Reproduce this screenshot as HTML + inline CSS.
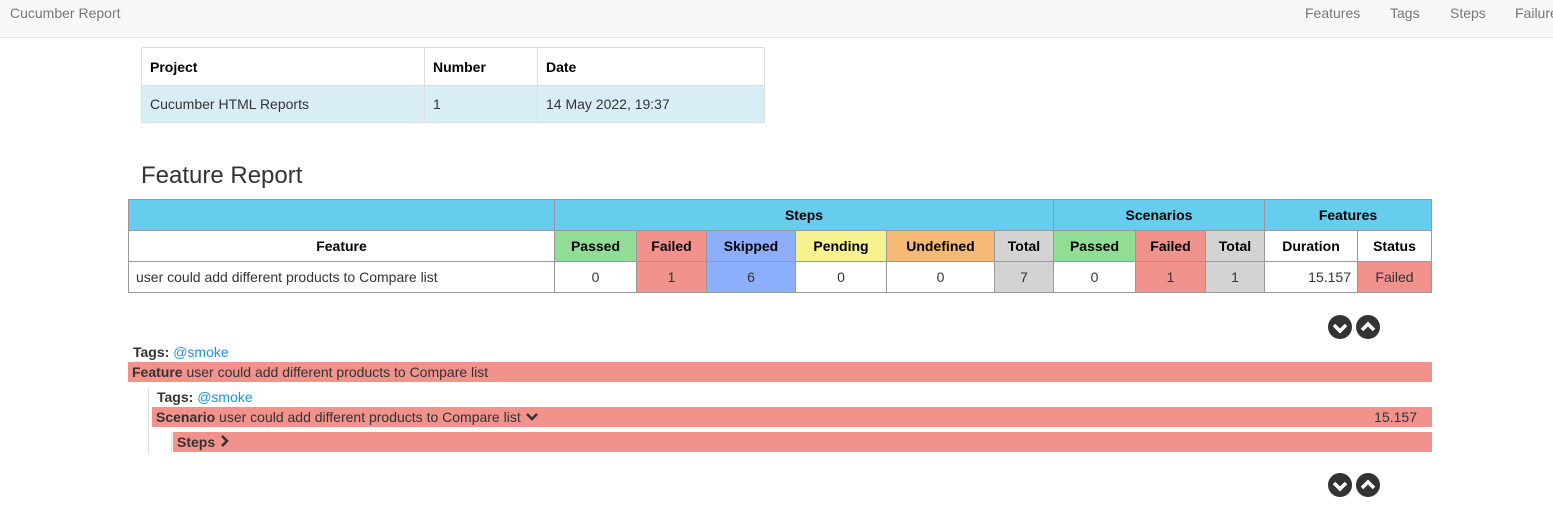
<!DOCTYPE html>
<html><head><style>
*{box-sizing:border-box;margin:0;padding:0}
body{width:1553px;height:514px;background:#fff;font-family:"Liberation Sans",sans-serif;font-size:14px;color:#333;position:relative;overflow:hidden}
.a{position:absolute}
.nav{left:0;top:0;width:1553px;height:38px;background:#f8f8f8;border-bottom:1px solid #e7e7e7}
.nav span{position:absolute;top:5px;color:#777;font-size:14px}
table{border-collapse:collapse;position:absolute}
td{border:1px solid #ddd;padding:0 8px}
#t2 td{border:1px solid #999;text-align:center;padding:0}
#t2 tr{height:31px}
.h{font-weight:bold;color:#000}
.p{background:#92dd96}.f{background:#f2928c}.s{background:#8daffb}.pe{background:#f5f28f}.u{background:#f5b975}.t{background:#d3d3d3}.b{background:#66cdee}
.bar{background:#f2928c;height:20px;line-height:20px;font-size:14px;color:#333}
</style></head><body>
<div class="a nav"><span style="left:10px">Cucumber Report</span><span style="left:1305px">Features</span><span style="left:1390px">Tags</span><span style="left:1450px">Steps</span><span style="left:1515px">Failures</span></div>
<table style="left:141px;top:47px;width:624px">
<tr style="height:38px"><td style="width:283px" class="h">Project</td><td style="width:113px" class="h">Number</td><td class="h">Date</td></tr>
<tr style="height:37px;background:#d9edf7"><td>Cucumber HTML Reports</td><td>1</td><td>14 May 2022, 19:37</td></tr>
</table>
<div class="a" style="left:141px;top:162px;font-size:24px;color:#333">Feature Report</div>
<table id="t2" style="left:128px;top:199px;width:1304px">
<tr><td class="b" style="width:426px"></td><td class="b h" colspan="6">Steps</td><td class="b h" colspan="3">Scenarios</td><td class="b h" colspan="2">Features</td></tr>
<tr class="h"><td>Feature</td><td class="p" style="width:82px">Passed</td><td class="f" style="width:70px">Failed</td><td class="s" style="width:89px">Skipped</td><td class="pe" style="width:91px">Pending</td><td class="u" style="width:108px">Undefined</td><td class="t" style="width:59px">Total</td><td class="p" style="width:82px">Passed</td><td class="f" style="width:70px">Failed</td><td class="t" style="width:59px">Total</td><td style="width:93px">Duration</td><td>Status</td></tr>
<tr><td style="text-align:left;padding-left:7px">user could add different products to Compare list</td><td>0</td><td class="f">1</td><td class="s">6</td><td>0</td><td>0</td><td class="t">7</td><td>0</td><td class="f">1</td><td class="t">1</td><td style="text-align:right;padding-right:6px">15.157</td><td class="f">Failed</td></tr>
</table>
<svg class="a" style="left:1327px;top:314px" width="54" height="26"><circle cx="13" cy="13" r="12" fill="#333"/><path d="M7 11l6 6 6-6" stroke="#fff" stroke-width="3.5" fill="none"/><circle cx="41" cy="13" r="12" fill="#333"/><path d="M35 16l6-6 6 6" stroke="#fff" stroke-width="3.5" fill="none"/></svg>
<svg class="a" style="left:1327px;top:472px" width="54" height="26"><circle cx="13" cy="13" r="12" fill="#333"/><path d="M7 11l6 6 6-6" stroke="#fff" stroke-width="3.5" fill="none"/><circle cx="41" cy="13" r="12" fill="#333"/><path d="M35 16l6-6 6 6" stroke="#fff" stroke-width="3.5" fill="none"/></svg>
<div class="a" style="left:133px;top:344px"><b>Tags:</b> <span style="color:#1e90e0">@smoke</span></div>
<div class="a bar" style="left:128px;top:362px;width:1304px;padding-left:4px"><b>Feature</b> user could add different products to Compare list</div>
<div class="a" style="left:148px;top:388px;width:1px;height:66px;background:#ddd"></div>
<div class="a" style="left:157px;top:389px"><b>Tags:</b> <span style="color:#1e90e0">@smoke</span></div>
<div class="a bar" style="left:152px;top:407px;width:1280px;padding-left:4px"><b>Scenario</b> user could add different products to Compare list <svg width="14" height="10"><path d="M2 2l5 5 5-5" stroke="#333" stroke-width="2.5" fill="none"/></svg><span style="position:absolute;right:15px">15.157</span></div>
<div class="a" style="left:171px;top:432px;width:1px;height:21px;background:#ddd"></div>
<div class="a bar" style="left:173px;top:432px;width:1259px;padding-left:4px"><b>Steps</b> <svg width="12" height="12"><path d="M3 1l5 5-5 5" stroke="#333" stroke-width="2.5" fill="none"/></svg></div>
</body></html>
